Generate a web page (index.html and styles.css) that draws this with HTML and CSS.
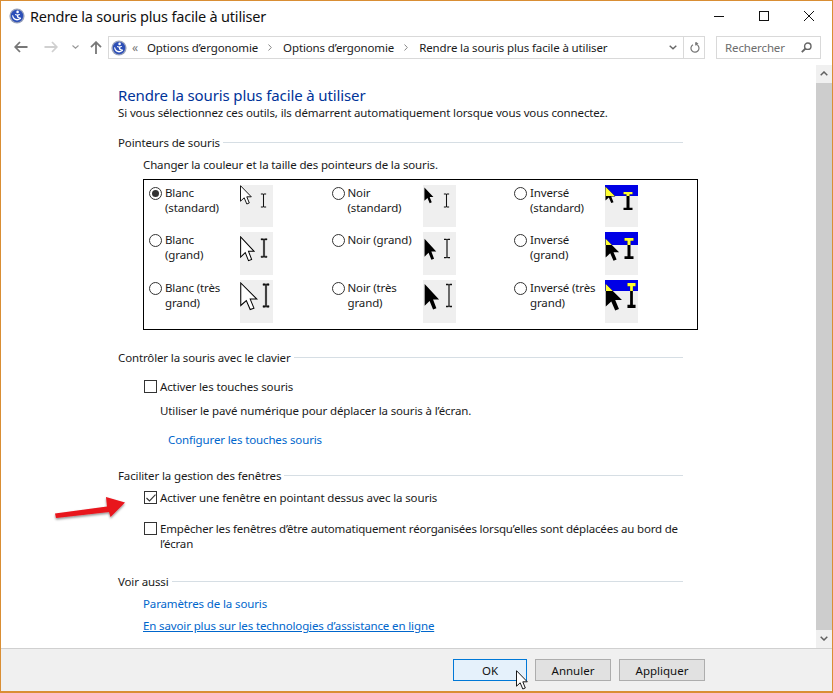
FILE: index.html
```html
<!DOCTYPE html>
<html lang="fr">
<head>
<meta charset="utf-8">
<title>Rendre la souris plus facile à utiliser</title>
<link rel="stylesheet" href="styles.css">
</head>
<body>
<svg class="defs" aria-hidden="true">
  <defs>
    <symbol id="logo" viewBox="0 0 16 16">
      <circle cx="8" cy="8" r="7.6" fill="#9aa3bb"/>
      <circle cx="8" cy="8" r="6.2" fill="#2c4fb8"/>
      <circle cx="8.6" cy="3.9" r="1.3" fill="#fff"/>
      <path d="M3 7.2C3.2 10.2 5.2 12.3 8 12.4 9.8 12.4 11.2 11.5 12.1 10.2L11.3 9.6C10.5 10.6 9.4 11.1 8.2 11 6 10.9 4.6 9.4 4.2 7.4Z" fill="#fff"/>
      <path d="M6.2 6.1L8 6.4 10.8 5.9 11 6.8 9.3 7.5 9.4 8.8 12 10 11.5 10.8 8.3 9.7 7.7 7.5 6 7Z" fill="#fff"/>
    </symbol>
    <symbol id="arrow" viewBox="0 0 12 20" preserveAspectRatio="none">
      <path d="M.5.7V16.2L4.2 12.8 6.8 19 9.3 18 6.8 11.8H11.3Z"/>
    </symbol>
    <symbol id="beam" viewBox="0 0 8 16" preserveAspectRatio="none">
      <path d="M1 .5H3.4L4 1.1 4.6.5H7V1.5H4.6V14.5H7V15.5H4.6L4 14.9 3.4 15.5H1V14.5H3.4V1.5H1Z"/>
    </symbol>
    <clipPath id="top11"><rect width="33" height="11"/></clipPath>
    <clipPath id="top13"><rect width="33" height="13"/></clipPath>
  </defs>
</svg>
<div class="window">
  <header class="titlebar">
    <svg class="logo"><use href="#logo"/></svg>
    <span class="title">Rendre la souris plus facile à utiliser</span>
    <div class="controls">
      <svg class="ctl" viewBox="0 0 10 10"><path d="M0 5.5H10" stroke="#111"/></svg>
      <svg class="ctl" viewBox="0 0 10 10"><rect x=".5" y=".5" width="9" height="9" fill="none" stroke="#111"/></svg>
      <svg class="ctl" viewBox="0 0 10 10"><path d="M0 0L10 10M10 0L0 10" stroke="#111" fill="none"/></svg>
    </div>
  </header>
  <nav class="navbar">
    <svg class="nav back" viewBox="0 0 14 12"><path d="M6 1L1.2 6 6 11M1.2 6H13.5" fill="none" stroke="#777" stroke-width="1.8"/></svg>
    <svg class="nav fwd" viewBox="0 0 14 12"><path d="M8 1L12.8 6 8 11M12.8 6H.5" fill="none" stroke="#d0d0d0" stroke-width="1.8"/></svg>
    <svg class="nav drop" viewBox="0 0 7 4"><path d="M.5.5L3.5 3.2 6.5.5" fill="none" stroke="#999" stroke-width="1.1"/></svg>
    <svg class="nav up" viewBox="0 0 12 13"><path d="M1 6.2L6 1.2 11 6.2M6 1.2V13" fill="none" stroke="#777" stroke-width="1.8"/></svg>
    <div class="address">
      <svg class="logo small"><use href="#logo"/></svg>
      <span class="dbl">«</span>
      <span class="crumb">Options d’ergonomie</span>
      <svg class="sep" viewBox="0 0 4 7"><path d="M.5.5L3.3 3.5 .5 6.5" fill="none" stroke="#888"/></svg>
      <span class="crumb">Options d’ergonomie</span>
      <svg class="sep" viewBox="0 0 4 7"><path d="M.5.5L3.3 3.5 .5 6.5" fill="none" stroke="#888"/></svg>
      <span class="crumb grow">Rendre la souris plus facile à utiliser</span>
      <svg class="addr-drop" viewBox="0 0 8 5"><path d="M.7.7L4 3.8 7.3.7" fill="none" stroke="#666" stroke-width="1.4"/></svg>
      <span class="addr-div"></span>
      <svg class="refresh" viewBox="0 0 10 12"><path d="M5 1.8H7.5M5.5 .2L7.5 1.8 5.5 3.4M3 2.7A4 4 0 1 0 7.4 3" fill="none" stroke="#777" stroke-width="1.2"/></svg>
    </div>
    <div class="search">
      <span class="search-text">Rechercher</span>
      <svg class="mag" viewBox="0 0 11 11"><circle cx="6.8" cy="4.2" r="3.2" fill="none" stroke="#666" stroke-width="1.4"/><path d="M4.5 6.5L.8 10.2" stroke="#666" stroke-width="1.8"/></svg>
    </div>
  </nav>
  <div class="body-row">
    <main class="content">
      <h1 class="heading">Rendre la souris plus facile à utiliser</h1>
      <p class="line">Si vous sélectionnez ces outils, ils démarrent automatiquement lorsque vous vous connectez.</p>

      <h2 class="section first">Pointeurs de souris</h2>
      <p class="line indent choose">Changer la couleur et la taille des pointeurs de la souris.</p>
      <div class="pointers">
        <div class="cell"><span class="radio on"></span><span class="plabel">Blanc (standard)</span>
          <svg class="preview" viewBox="0 0 33 42"><use href="#arrow" x="0" y="0" width="12" height="20" fill="#fff" stroke="#000" stroke-width=".9"/><use href="#beam" x="20" y="8" width="7" height="15" fill="#111"/></svg></div>
        <div class="cell"><span class="radio"></span><span class="plabel">Noir (standard)</span>
          <svg class="preview" viewBox="0 0 33 42"><use href="#arrow" x="1" y="2" width="10" height="17" fill="#000"/><use href="#beam" x="20" y="8" width="7" height="15" fill="#111"/></svg></div>
        <div class="cell"><span class="radio"></span><span class="plabel">Inversé (standard)</span>
          <svg class="preview" viewBox="0 0 33 42"><rect width="33" height="11" fill="#0000e6"/><use href="#arrow" x="0" y="1" width="11" height="18" fill="#000"/><g clip-path="url(#top11)"><use href="#arrow" x="0" y="1" width="11" height="18" fill="#ffff33"/></g><use href="#beam" x="18" y="7" width="10" height="18" fill="#000" stroke="#000" stroke-width="1.2"/><g clip-path="url(#top11)"><use href="#beam" x="18" y="7" width="10" height="18" fill="#ffff33" stroke="#ffff33" stroke-width="1.2"/></g></svg></div>

        <div class="cell"><span class="radio"></span><span class="plabel">Blanc (grand)</span>
          <svg class="preview" viewBox="0 0 33 43"><use href="#arrow" x="0" y="4" width="15" height="26" fill="#fff" stroke="#000" stroke-width=".8"/><use href="#beam" x="20" y="6" width="8" height="20" fill="#111" stroke="#111" stroke-width=".4"/></svg></div>
        <div class="cell"><span class="radio"></span><span class="plabel">Noir (grand)</span>
          <svg class="preview" viewBox="0 0 33 43"><use href="#arrow" x="1" y="6" width="13" height="23" fill="#000"/><use href="#beam" x="20" y="6" width="8" height="21" fill="#111"/></svg></div>
        <div class="cell"><span class="radio"></span><span class="plabel">Inversé (grand)</span>
          <svg class="preview" viewBox="0 0 33 43"><rect width="33" height="13" fill="#0000e6"/><use href="#arrow" x="0" y="6" width="15" height="24" fill="#000"/><g clip-path="url(#top13)"><use href="#arrow" x="0" y="6" width="15" height="24" fill="#ffff33"/></g><use href="#beam" x="19" y="6" width="10" height="21" fill="#000" stroke="#000" stroke-width="1.2"/><g clip-path="url(#top13)"><use href="#beam" x="19" y="6" width="10" height="21" fill="#ffff33" stroke="#ffff33" stroke-width="1.2"/></g></svg></div>

        <div class="cell"><span class="radio"></span><span class="plabel">Blanc (très grand)</span>
          <svg class="preview" viewBox="0 0 33 43"><use href="#arrow" x="0" y="2" width="18" height="29" fill="#fff" stroke="#000" stroke-width=".7"/><use href="#beam" x="22" y="3" width="8" height="25" fill="#111" stroke="#111" stroke-width=".4"/></svg></div>
        <div class="cell"><span class="radio"></span><span class="plabel">Noir (très grand)</span>
          <svg class="preview" viewBox="0 0 33 43"><use href="#arrow" x="1" y="3" width="16" height="28" fill="#000"/><use href="#beam" x="22" y="3" width="8" height="25" fill="#111"/></svg></div>
        <div class="cell"><span class="radio"></span><span class="plabel">Inversé (très grand)</span>
          <svg class="preview" viewBox="0 0 33 43"><rect width="33" height="11" fill="#0000e6"/><use href="#arrow" x="0" y="3" width="18" height="29" fill="#000"/><g clip-path="url(#top11)"><use href="#arrow" x="0" y="3" width="18" height="29" fill="#ffff33"/></g><use href="#beam" x="22" y="3" width="9" height="25" fill="#000" stroke="#000" stroke-width="1.2"/><g clip-path="url(#top11)"><use href="#beam" x="22" y="3" width="9" height="25" fill="#ffff33" stroke="#ffff33" stroke-width="1.2"/></g></svg></div>
      </div>

      <h2 class="section s2">Contrôler la souris avec le clavier</h2>
      <div class="check-row r1"><span class="checkbox"></span><span class="line">Activer les touches souris</span></div>
      <p class="line deep use">Utiliser le pavé numérique pour déplacer la souris à l’écran.</p>
      <a class="link config" href="#">Configurer les touches souris</a>

      <h2 class="section s3">Faciliter la gestion des fenêtres</h2>
      <div class="check-row r2"><span class="checkbox">
        <svg class="tick" viewBox="0 0 10 8"><path d="M.5 4L3.5 7 9.5.7" fill="none" stroke="#333" stroke-width="1.1"/></svg></span><span class="line">Activer une fenêtre en pointant dessus avec la souris</span></div>
      <div class="check-row r3"><span class="checkbox"></span><span class="line wrap">Empêcher les fenêtres d’être automatiquement réorganisées lorsqu’elles sont déplacées au bord de l’écran</span></div>

      <h2 class="section s4">Voir aussi</h2>
      <a class="link also" href="#">Paramètres de la souris</a>
      <a class="link also under" href="#">En savoir plus sur les technologies d’assistance en ligne</a>
    </main>
    <aside class="scrollbar">
      <svg class="sb-arrow" viewBox="0 0 8 5"><path d="M.7 4.2L4 1 7.3 4.2" fill="none" stroke="#606060" stroke-width="1.5"/></svg>
      <div class="thumb"></div>
      <svg class="sb-arrow" viewBox="0 0 8 5"><path d="M.7.8L4 4 7.3.8" fill="none" stroke="#606060" stroke-width="1.5"/></svg>
    </aside>
  </div>
  <footer class="footer">
    <button class="btn ok">OK</button>
    <button class="btn cancel">Annuler</button>
    <button class="btn apply">Appliquer</button>
  </footer>
</div>
<svg class="red-arrow" viewBox="0 0 80 30"><defs><filter id="sh" x="-10%" y="-20%" width="125%" height="150%"><feDropShadow dx="0" dy="1.5" stdDeviation="1.2" flood-color="#000" flood-opacity=".45"/></filter></defs><path d="M3 21.5L55 14.5 54 5 73 10.5 58.5 25 57 20 4 26Z" fill="#e8141c" filter="url(#sh)"/></svg>
<svg class="mouse" viewBox="0 0 12 20"><use href="#arrow" fill="#fff" stroke="#000" stroke-width=".9"/></svg>
</body>
</html>
```
FILE: styles.css
```css
* { box-sizing: border-box; }
html, body { margin: 0; padding: 0; }
body {
  width: 833px;
  height: 693px;
  overflow: hidden;
  position: relative;
  background: #fff;
  font-family: "Noto Sans", "Open Sans", sans-serif;
  font-size: 11.5px;
  letter-spacing: -0.13px;
  line-height: 15px;
  color: #1a1a1a;
}
.defs { position: absolute; width: 0; height: 0; }
.window {
  width: 833px;
  height: 693px;
  display: flex;
  flex-direction: column;
  border: 1px solid #d98e34;
  border-bottom-width: 2px;
}
.titlebar {
  height: 30px;
  flex: none;
  display: flex;
  align-items: center;
  padding-left: 8px;
}
.logo { width: 16px; height: 16px; flex: none; }
.title { margin-left: 5px; font-size: 14.5px; letter-spacing: -0.2px; line-height: 20px; color: #111; }
.controls { margin-left: auto; display: flex; gap: 35px; padding-right: 18px; }
.ctl { width: 10px; height: 10px; display: block; }
.navbar {
  height: 34px;
  flex: none;
  display: flex;
  align-items: flex-start;
  padding-top: 5px;
  position: relative;
}
.nav { flex: none; display: block; }
.back { width: 14px; height: 12px; margin: 5px 0 0 13px; }
.fwd { width: 14px; height: 12px; margin: 5px 0 0 16px; }
.drop { width: 7px; height: 4px; margin: 9px 0 0 14px; }
.up { width: 12px; height: 13px; margin: 5px 0 0 11px; }
.address {
  width: 597px;
  height: 23px;
  margin-left: 6px;
  border: 1px solid #d9d9d9;
  display: flex;
  align-items: center;
  padding-left: 2px;
  flex: none;
}
.logo.small { width: 16px; height: 16px; }
.dbl { margin-left: 5px; width: 13px; color: #777; font-size: 12px; }
.crumb { margin-left: 2px; white-space: nowrap; }
.crumb + .sep { margin-left: 10px; }
.sep { width: 4px; height: 7px; flex: none; margin-right: 9px; }
.grow { flex: 1; }
.addr-drop { width: 8px; height: 5px; flex: none; margin-right: 6px; }
.addr-div { width: 1px; height: 21px; background: #d9d9d9; flex: none; }
.refresh { width: 10px; height: 12px; flex: none; margin: 0 4px 0 6px; }
.search {
  width: 105px;
  height: 23px;
  margin-left: 11px;
  border: 1px solid #d9d9d9;
  display: flex;
  align-items: center;
  padding: 0 8px;
  flex: none;
}
.search-text { color: #6d6d6d; flex: 1; }
.mag { width: 11px; height: 11px; }
.body-row { flex: 1; min-height: 0; display: flex; }
.content { flex: 1; min-width: 0; padding: 21px 0 0 117px; }
.heading {
  margin: 0;
  font-size: 15px;
  letter-spacing: -0.12px;
  line-height: 19px;
  font-weight: 400;
  color: #003399;
}
.line { margin: 0; display: block; white-space: nowrap; }
.wrap { white-space: normal; width: 540px; letter-spacing: -0.19px; }
.section {
  margin: 15px 0 0;
  width: 565px;
  font-size: inherit;
  font-weight: 400;
  line-height: 15px;
  display: flex;
  align-items: center;
  gap: 3px;
}
.section::after { content: ""; flex: 1; height: 1px; background: #d6dee4; }
.s2 { margin-top: 20px; }
.s3 { margin-top: 21px; }
.s4 { margin-top: 23px; }
.indent { margin-left: 25px; }
.choose { margin-top: 7px; }
.pointers {
  width: 555px;
  height: 151px;
  margin: 7px 0 0 25px;
  border: 1px solid #000;
  padding: 5px 0 0 5px;
  display: grid;
  grid-template-columns: 182.5px 182.5px 182.5px;
  grid-template-rows: 42px 43px 43px;
  row-gap: 5px;
}
.cell { display: flex; align-items: flex-start; }
.radio {
  width: 13px;
  height: 13px;
  flex: none;
  margin-top: 2px;
  border: 1px solid #333;
  border-radius: 50%;
  background: #fff;
  position: relative;
}
.radio.on::after {
  content: "";
  position: absolute;
  left: 2px;
  top: 2px;
  width: 7px;
  height: 7px;
  border-radius: 50%;
  background: #333;
}
.plabel { width: 78px; padding-left: 3px; padding-right: 8px; flex: none; }
.preview { width: 33px; height: 100%; background: #efefef; display: block; flex: none; }
.check-row { display: flex; align-items: flex-start; margin-left: 26px; gap: 3px; }
.r1 { margin-top: 14px; }
.r2 { margin-top: 7px; }
.r3 { margin-top: 16px; }
.checkbox {
  width: 13px;
  height: 13px;
  flex: none;
  margin-top: 1px;
  border: 1px solid #333;
  background: #fff;
  display: flex;
  align-items: center;
  justify-content: center;
}
.tick { width: 10px; height: 8px; display: block; }
.deep { margin-left: 42px; }
.use { margin-top: 9px; }
.link { display: block; color: #0066cc; text-decoration: none; white-space: nowrap; }
.config { margin: 14px 0 0 50px; }
.also { margin: 7px 0 0 25px; }
.under { text-decoration: underline; }
.scrollbar {
  width: 16px;
  flex: none;
  background: #f0f0f0;
  display: flex;
  flex-direction: column;
  align-items: center;
}
.sb-arrow { width: 8px; height: 5px; flex: none; margin: 6px 0 7px; }
.thumb { flex: 1; width: 100%; background: #cdcdcd; }
.footer {
  height: 43px;
  flex: none;
  background: #f0f0f0;
  border-top: 1px solid #d0d0d0;
  display: flex;
  justify-content: flex-end;
  align-items: flex-start;
  gap: 8px;
  padding: 10px 127px 0 0;
}
.btn {
  height: 22px;
  padding: 0;
  font: inherit;
  color: #111;
  background: #e1e1e1;
  border: 1px solid #adadad;
}
.ok { width: 74px; background: #e5f1fb; border-color: #0078d7; }
.cancel { width: 76px; }
.apply { width: 86px; }
.red-arrow { position: absolute; left: 52px; top: 492px; width: 80px; height: 30px; }
.mouse { position: absolute; left: 516px; top: 670px; width: 12px; height: 20px; }
```
